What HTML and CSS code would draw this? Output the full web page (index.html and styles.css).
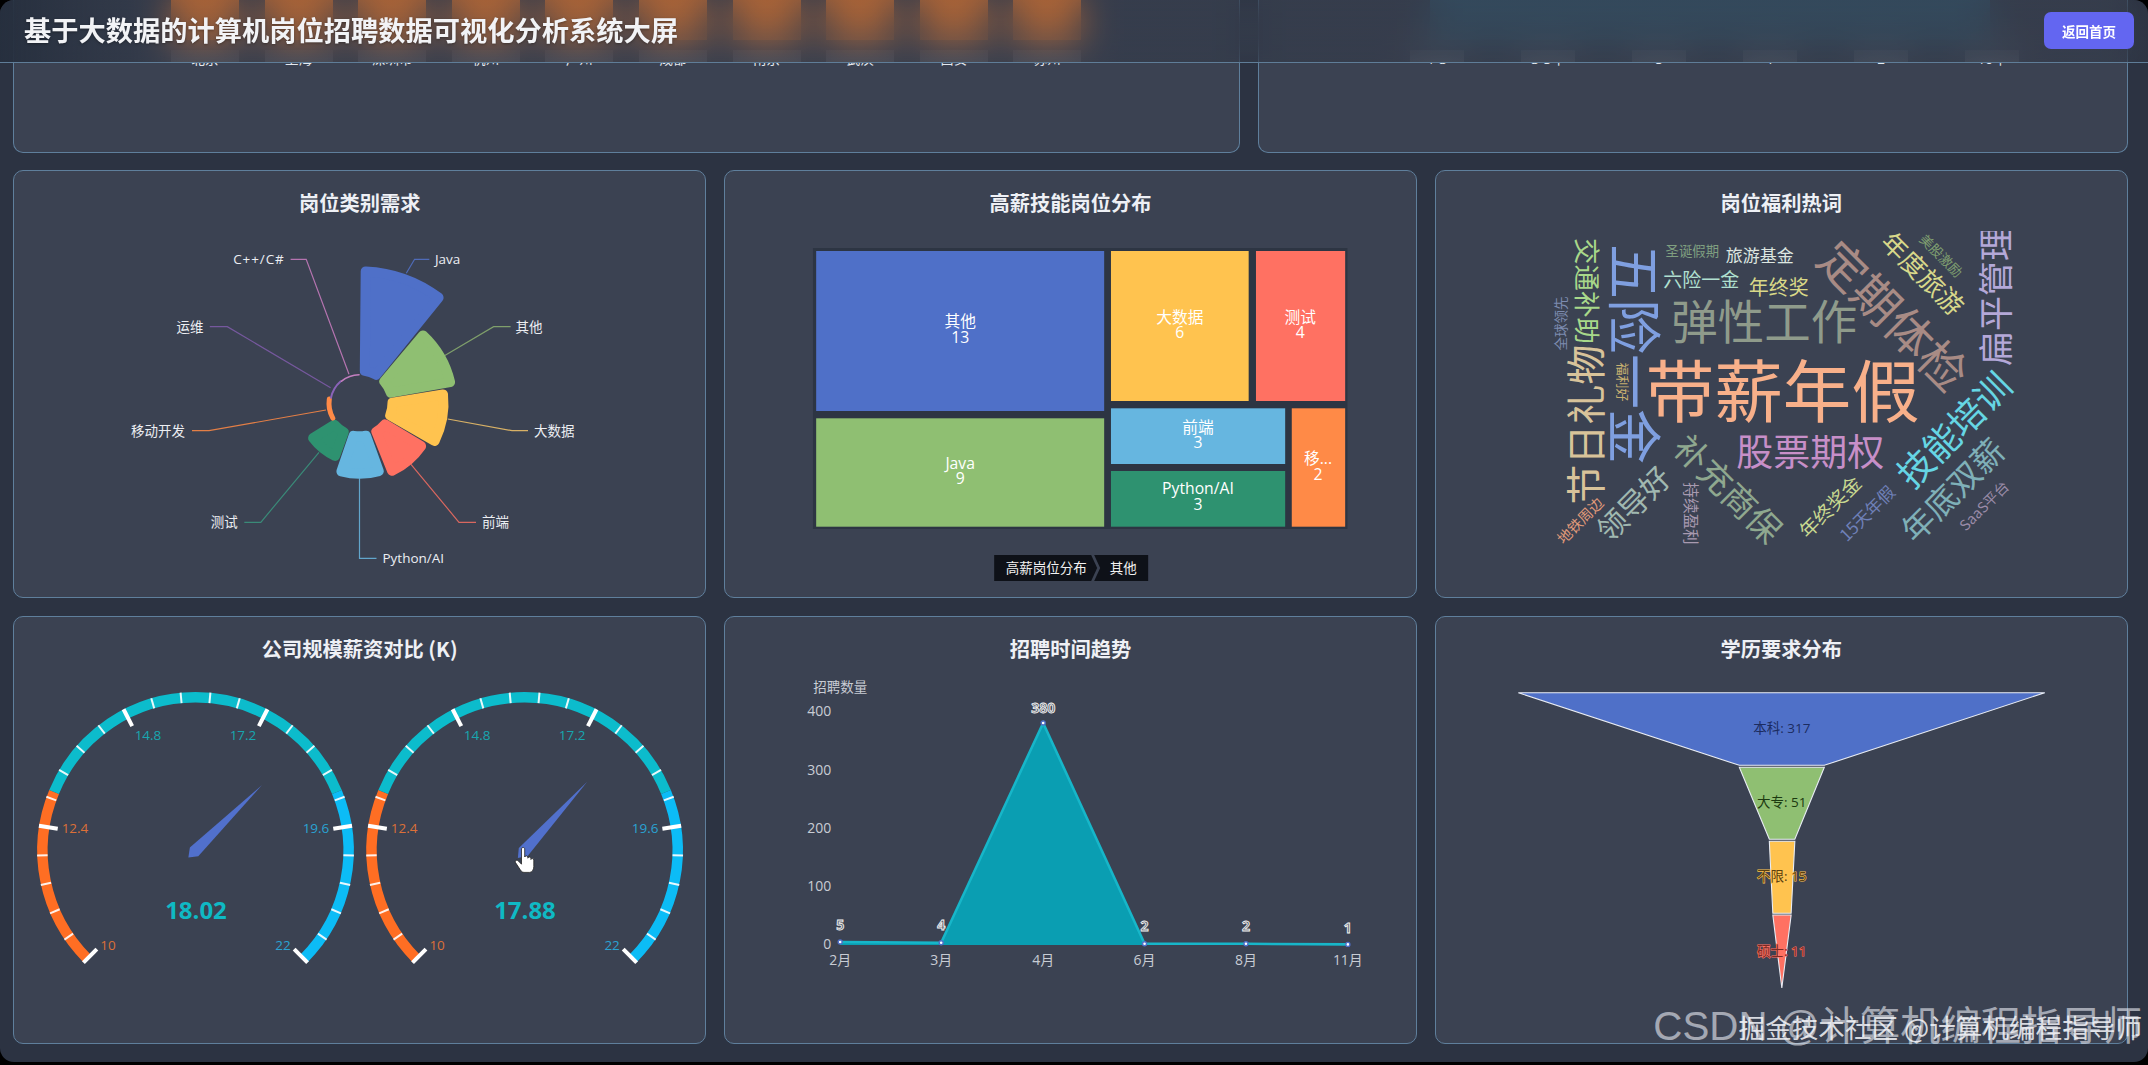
FILE: index.html
```html
<!DOCTYPE html>
<html lang="zh-CN">
<head>
<meta charset="utf-8">
<title>基于大数据的计算机岗位招聘数据可视化分析系统大屏</title>
<link rel="stylesheet" href="styles.css">
</head>
<body>
<div class="screen">
  <main class="board">
    <section class="row-top">
      <article class="card card-clip">
        <div class="bars bars-orange">
          <div class="bar-col"><i></i><span>北京</span></div>
          <div class="bar-col"><i></i><span>上海</span></div>
          <div class="bar-col"><i></i><span>深圳市</span></div>
          <div class="bar-col"><i></i><span>杭州</span></div>
          <div class="bar-col"><i></i><span>广州</span></div>
          <div class="bar-col"><i></i><span>成都</span></div>
          <div class="bar-col"><i></i><span>南京</span></div>
          <div class="bar-col"><i></i><span>武汉</span></div>
          <div class="bar-col"><i></i><span>西安</span></div>
          <div class="bar-col"><i></i><span>苏州</span></div>
        </div>
      </article>
      <article class="card card-clip">
        <div class="bars bars-blue">
          <div class="bar-col"><i></i><span>1-3</span></div>
          <div class="bar-col"><i></i><span>3-5年</span></div>
          <div class="bar-col"><i></i><span>5</span></div>
          <div class="bar-col"><i></i><span>1</span></div>
          <div class="bar-col"><i></i><span>2</span></div>
          <div class="bar-col"><i></i><span>10年</span></div>
        </div>
      </article>
    </section>

    <section class="row">
      <article class="card">
        <h3 class="card-title">岗位类别需求</h3>
        <svg class="chart" viewBox="14 231 691.33 366">
          <g class="leaders">
            <polyline stroke="#4f6bb8" points="406.3,273.3 414.6,259.3 429.3,259.3"/>
            <polyline stroke="#7f9f6b" points="444.4,355.7 493.6,326.7 510.6,326.7"/>
            <polyline stroke="#d8b166" points="447.7,419 512,430.7 528,430.7"/>
            <polyline stroke="#d9675f" points="411,464.3 459,522.3 476,522.3"/>
            <polyline stroke="#62a6cc" points="359.5,478.3 359.5,558.3 376.5,558.3"/>
            <polyline stroke="#3a8a78" points="319,452.3 260.8,522.3 244.3,522.3"/>
            <polyline stroke="#e47f46" points="326,410 209,430.7 192,430.7"/>
            <polyline stroke="#76589e" points="330.6,387.7 227.3,326.7 209.8,326.7"/>
            <polyline stroke="#b574b0" points="349,374.3 306.2,259.3 290.6,259.3"/>
          </g>
          <g class="rose">
            <path class="s-blue" d="M365.7 271.4A132 132 0 0 1 438.6 297.6L376.1 374.8A33 33 0 0 0 364.8 370.7Z"/>
            <path class="s-green" d="M423 335.4A93 93 0 0 1 450.1 382.2L390.8 392.7A33 33 0 0 0 384.3 381.5Z"/>
            <path class="s-yellow" d="M443 394.4A84 84 0 0 1 434.6 440.9L390.2 415.3A33 33 0 0 0 392.5 402.8Z"/>
            <path class="s-red" d="M421.1 446.1A75 75 0 0 1 392.1 470.8L376.3 431.7A33 33 0 0 0 384.9 424.4Z"/>
            <path class="s-sky" d="M378.8 471.1A70.5 70.5 0 0 1 341.4 471.4L353.6 435.8A33 33 0 0 0 366 435.7Z"/>
            <path class="s-teal" d="M335.1 455.9A58 58 0 0 1 313.1 438.1L334.5 424.8A33 33 0 0 0 343.7 432.2Z"/>
          </g>
          <path class="thin thin-orange" d="M332.8 418.1A30.5 30.5 0 0 1 329.3 399.1"/>
          <path class="thin thin-purple" d="M331 397.8A29 29 0 0 1 340.5 381.4"/>
          <path class="thin thin-pink" d="M341.6 381.2A28.5 28.5 0 0 1 359 374.8"/>
          <g class="lbl">
            <text x="435" y="259">Java</text>
            <text x="515.6" y="326.7">其他</text>
            <text x="534" y="430.7">大数据</text>
            <text x="482" y="522.3">前端</text>
            <text x="382.5" y="558.3">Python/AI</text>
          </g>
          <g class="lbl lbl-end">
            <text x="237.8" y="522.3">测试</text>
            <text x="185" y="430.7">移动开发</text>
            <text x="203.4" y="326.7">运维</text>
            <text class="wide" x="284.7" y="259.3">C++/C#</text>
          </g>
        </svg>
      </article>

      <article class="card">
        <h3 class="card-title">高薪技能岗位分布</h3>
        <svg class="chart" viewBox="724.83 231 691.33 366">
          <rect class="tm-bg" x="812.8" y="248" width="534.5" height="281"/>
          <rect fill="#4f70c8" x="816" y="251" width="288" height="160"/>
          <rect fill="#8fbf72" x="816" y="418.3" width="288" height="108.4"/>
          <rect fill="#ffc34f" x="1110.8" y="251" width="137.7" height="150"/>
          <rect fill="#ff7162" x="1255.8" y="251" width="89.2" height="150"/>
          <rect fill="#66b6e0" x="1110.8" y="408.3" width="174.2" height="55.7"/>
          <rect fill="#2e9270" x="1110.8" y="471" width="174.2" height="55.7"/>
          <rect fill="#ff8a47" x="1291.6" y="408.3" width="53.4" height="118.4"/>
          <g class="tm-text">
            <text x="960" y="321">其他</text><text x="960" y="336.7">13</text>
            <text x="960" y="462.7">Java</text><text x="960" y="478.3">9</text>
            <text x="1179.7" y="316.7">大数据</text><text x="1179.7" y="331.7">6</text>
            <text x="1300" y="316.7">测试</text><text x="1300" y="331.7">4</text>
            <text x="1197.8" y="427.3">前端</text><text x="1197.8" y="442.3">3</text>
            <text x="1197.8" y="488.3">Python/AI</text><text x="1197.8" y="504.3">3</text>
            <text x="1317.8" y="458.3">移...</text><text x="1317.8" y="474">2</text>
          </g>
          <polygon class="crumb" points="994,555 1091,555 1097,568 1091,581 994,581"/>
          <polygon class="crumb" points="1094,555 1148,555 1148,581 1094,581 1100,568"/>
          <g class="crumb-text">
            <text x="1046" y="568">高薪岗位分布</text>
            <text x="1123" y="568">其他</text>
          </g>
        </svg>
      </article>

      <article class="card">
        <h3 class="card-title">岗位福利热词</h3>
        <svg class="chart" viewBox="1435.67 231 691.33 366">
          <g class="cloud">
            <text x="1782.5" y="388" font-size="68.5" fill="#f8b08a">带薪年假</text>
            <text x="1637.4" y="354" font-size="55" fill="#7f9fe0" transform="rotate(90 1637.4 354)">五险一金</text>
            <text x="1895" y="314" font-size="47" fill="#a88b85" transform="rotate(45 1895 314)">定期体检</text>
            <text x="1764" y="319" font-size="46.5" fill="#8f9b8b">弹性工作</text>
            <text x="1810" y="450.5" font-size="37" fill="#c78fc8">股票期权</text>
            <text x="1952" y="428" font-size="36" fill="#66d6e4" transform="rotate(-45 1952 428)">技能培训</text>
            <text x="1951" y="488.5" font-size="32.5" fill="#7fb0b8" transform="rotate(-45 1951 488.5)">年底双薪</text>
            <text x="1583.4" y="424.6" font-size="40" fill="#d8c39a" transform="rotate(-90 1583.4 424.6)">节日礼物</text>
            <text x="1588" y="291" font-size="26.5" fill="#a8d88a" transform="rotate(90 1588 291)">交通补助</text>
            <text x="1729" y="487.5" font-size="34" fill="#8fa88f" transform="rotate(45 1729 487.5)">补充商保</text>
            <text x="1632" y="502.5" font-size="30" fill="#a0b8b0" transform="rotate(-45 1632 502.5)">领导好</text>
            <text x="1923.5" y="272.5" font-size="26" fill="#d8d88a" transform="rotate(45 1923.5 272.5)">年度旅游</text>
            <text x="1993" y="296" font-size="35" fill="#b4a8d8" transform="rotate(-90 1993 296)">扁平管理</text>
            <text x="1829" y="506" font-size="19.5" fill="#c8d890" transform="rotate(-45 1829 506)">年终奖金</text>
            <text x="1866" y="512.5" font-size="17" fill="#6f80b8" transform="rotate(-45 1866 512.5)">15天年假</text>
            <text x="1983" y="505" font-size="14.5" fill="#9a8ba8" transform="rotate(-45 1983 505)">SaaS平台</text>
            <text x="1691.7" y="513.5" font-size="15.6" fill="#a89ab0" transform="rotate(90 1691.7 513.5)">持续盈利</text>
            <text x="1579" y="520" font-size="14.5" fill="#e09a7a" transform="rotate(-45 1579 520)">地铁周边</text>
            <text x="1560" y="323.5" font-size="13.5" fill="#7d8cb0" transform="rotate(-90 1560 323.5)">全球领先</text>
            <text x="1623" y="382" font-size="13" fill="#c8b070" transform="rotate(90 1623 382)">福利好</text>
            <text x="1692" y="250.5" font-size="13.4" fill="#7f9f80">圣诞假期</text>
            <text x="1759.5" y="255" font-size="17" fill="#dde6e0">旅游基金</text>
            <text x="1701" y="279" font-size="19" fill="#b0e0d0">六险一金</text>
            <text x="1778.5" y="287" font-size="20" fill="#d8d888">年终奖</text>
            <text x="1941.5" y="255" font-size="13.5" fill="#7f9f70" transform="rotate(45 1941.5 255)">美股激励</text>
          </g>
        </svg>
      </article>
    </section>

    <section class="row">
      <article class="card">
        <h3 class="card-title">公司规模薪资对比 (K)</h3>
        <svg class="chart" viewBox="14 677 691.33 366">
          <defs>
            <g id="gauge">
              <g class="g-band">
                <path class="g-orange" d="M87.3 958.7A153 153 0 0 1 54.1 791.9"/>
                <path class="g-teal" d="M54.1 791.9A153 153 0 0 1 336.9 791.9"/>
                <path class="g-blue" d="M336.9 791.9A153 153 0 0 1 303.7 958.7"/>
              </g>
              <g class="g-minor">
                <line x1="195.5" y1="692" x2="195.5" y2="702.5" transform="rotate(-124.2 195.5 850.5)"/>
                <line x1="195.5" y1="692" x2="195.5" y2="702.5" transform="rotate(-113.4 195.5 850.5)"/>
                <line x1="195.5" y1="692" x2="195.5" y2="702.5" transform="rotate(-102.6 195.5 850.5)"/>
                <line x1="195.5" y1="692" x2="195.5" y2="702.5" transform="rotate(-91.8 195.5 850.5)"/>
                <line x1="195.5" y1="692" x2="195.5" y2="702.5" transform="rotate(-70.2 195.5 850.5)"/>
                <line x1="195.5" y1="692" x2="195.5" y2="702.5" transform="rotate(-59.4 195.5 850.5)"/>
                <line x1="195.5" y1="692" x2="195.5" y2="702.5" transform="rotate(-48.6 195.5 850.5)"/>
                <line x1="195.5" y1="692" x2="195.5" y2="702.5" transform="rotate(-37.8 195.5 850.5)"/>
                <line x1="195.5" y1="692" x2="195.5" y2="702.5" transform="rotate(-16.2 195.5 850.5)"/>
                <line x1="195.5" y1="692" x2="195.5" y2="702.5" transform="rotate(-5.4 195.5 850.5)"/>
                <line x1="195.5" y1="692" x2="195.5" y2="702.5" transform="rotate(5.4 195.5 850.5)"/>
                <line x1="195.5" y1="692" x2="195.5" y2="702.5" transform="rotate(16.2 195.5 850.5)"/>
                <line x1="195.5" y1="692" x2="195.5" y2="702.5" transform="rotate(37.8 195.5 850.5)"/>
                <line x1="195.5" y1="692" x2="195.5" y2="702.5" transform="rotate(48.6 195.5 850.5)"/>
                <line x1="195.5" y1="692" x2="195.5" y2="702.5" transform="rotate(59.4 195.5 850.5)"/>
                <line x1="195.5" y1="692" x2="195.5" y2="702.5" transform="rotate(70.2 195.5 850.5)"/>
                <line x1="195.5" y1="692" x2="195.5" y2="702.5" transform="rotate(91.8 195.5 850.5)"/>
                <line x1="195.5" y1="692" x2="195.5" y2="702.5" transform="rotate(102.6 195.5 850.5)"/>
                <line x1="195.5" y1="692" x2="195.5" y2="702.5" transform="rotate(113.4 195.5 850.5)"/>
                <line x1="195.5" y1="692" x2="195.5" y2="702.5" transform="rotate(124.2 195.5 850.5)"/>
              </g>
              <g class="g-major">
                <line x1="195.5" y1="692" x2="195.5" y2="711" transform="rotate(-135 195.5 850.5)"/>
                <line x1="195.5" y1="692" x2="195.5" y2="711" transform="rotate(-81 195.5 850.5)"/>
                <line x1="195.5" y1="692" x2="195.5" y2="711" transform="rotate(-27 195.5 850.5)"/>
                <line x1="195.5" y1="692" x2="195.5" y2="711" transform="rotate(27 195.5 850.5)"/>
                <line x1="195.5" y1="692" x2="195.5" y2="711" transform="rotate(81 195.5 850.5)"/>
                <line x1="195.5" y1="692" x2="195.5" y2="711" transform="rotate(135 195.5 850.5)"/>
              </g>
              <g class="g-lbl">
                <text class="c-orange" x="108" y="945">10</text>
                <text class="c-orange" x="75" y="828">12.4</text>
                <text class="c-teal" x="148" y="735">14.8</text>
                <text class="c-teal" x="243" y="735">17.2</text>
                <text class="c-blue" x="316" y="828">19.6</text>
                <text class="c-blue" x="283" y="945">22</text>
              </g>
            </g>
          </defs>
          <use href="#gauge"/>
          <use href="#gauge" transform="translate(329.1 0)"/>
          <polygon class="needle" points="0,-93 -6,2 0,10 6,2" transform="translate(195.5 850.5) rotate(45.5)"/>
          <polygon class="needle" points="0,-93 -6,2 0,10 6,2" transform="translate(524.6 850.5) rotate(42.3)"/>
          <text class="g-value" x="196" y="910">18.02</text>
          <text class="g-value" x="525" y="910">17.88</text>
          <path class="hand" d="M521.5 849c0-2 3.2-2 3.2 0v8c.6-1.6 3.1-1.5 3.1.4v.8c.6-1.6 3.1-1.5 3.1.4v.9c.6-1.3 2.9-1.2 2.9.6v6.4c0 3.2-1.9 5.9-4.2 5.9h-5.6c-2.2 0-3.2-1.7-4.9-4.4l-3.6-5.4c-1.1-1.9 1.4-3.3 2.9-1.6l3.1 3.2Z"/>
        </svg>
      </article>

      <article class="card">
        <h3 class="card-title">招聘时间趋势</h3>
        <svg class="chart" viewBox="724.83 677 691.33 366">
          <text class="axis-name" x="840" y="687.3">招聘数量</text>
          <g class="axis axis-y">
            <text x="831" y="711">400</text>
            <text x="831" y="770">300</text>
            <text x="831" y="828">200</text>
            <text x="831" y="885.7">100</text>
            <text x="831" y="943.3">0</text>
          </g>
          <path class="area" d="M840 945V942L941 942.7L1043 723L1144.4 943.8L1245.8 943.8L1347.7 944.4V945Z"/>
          <polyline class="line" points="840,942 941,942.7 1043,723 1144.4,943.8 1245.8,943.8 1347.7,944.4"/>
          <g class="dots">
            <circle cx="840" cy="942" r="2"/><circle cx="941" cy="942.7" r="2"/><circle cx="1043" cy="723" r="2"/>
            <circle cx="1144.4" cy="943.8" r="2"/><circle cx="1245.8" cy="943.8" r="2"/><circle cx="1347.7" cy="944.4" r="2"/>
          </g>
          <g class="axis">
            <text x="840" y="959.3">2月</text>
            <text x="941" y="959.3">3月</text>
            <text x="1043" y="959.3">4月</text>
            <text x="1144.4" y="959.3">6月</text>
            <text x="1245.8" y="959.3">8月</text>
            <text x="1347.7" y="959.3">11月</text>
          </g>
          <g class="vals">
            <text x="1043" y="707.7">380</text>
            <text x="840" y="925">5</text>
            <text x="941" y="925">4</text>
            <text x="1144.4" y="926">2</text>
            <text x="1245.8" y="926">2</text>
            <text x="1347.7" y="927.7">1</text>
          </g>
        </svg>
      </article>

      <article class="card">
        <h3 class="card-title">学历要求分布</h3>
        <svg class="chart" viewBox="1435.67 677 691.33 366">
          <g class="funnel">
            <polygon class="s-blue" points="1518,692.7 2044.5,692.7 1824,765.3 1739,765.3"/>
            <polygon class="s-green" points="1739,767.3 1824,767.3 1794.5,839.3 1769,839.3"/>
            <polygon class="s-yellow" points="1769,841.3 1794.5,841.3 1790.8,913.3 1772.5,913.3"/>
            <polygon class="s-red" points="1772.5,915 1790.8,915 1781.5,988"/>
          </g>
          <g class="f-lbl">
            <text class="f-1" x="1781.5" y="728">本科: 317</text>
            <text class="f-2" x="1781.5" y="801.7">大专: 51</text>
            <text class="f-3" x="1781.5" y="875.7">不限: 15</text>
            <text class="f-4" x="1781.5" y="950.7">硕士: 11</text>
          </g>
        </svg>
      </article>
    </section>
  </main>

  <header class="topbar">
    <h1 class="topbar-title">基于大数据的计算机岗位招聘数据可视化分析系统大屏</h1>
    <button class="home-btn">返回首页</button>
  </header>

  <div class="wm wm-csdn">CSDN @计算机编程指导师</div>
  <div class="wm wm-juejin">掘金技术社区 @计算机编程指导师</div>
</div>
</body>
</html>
```
FILE: styles.css
```css
* { box-sizing: border-box; }
html, body { margin: 0; height: 1065px; background: #000; overflow: hidden; }
body { font-family: "Open Sans", "Noto Sans CJK SC", sans-serif; }

.screen {
  position: relative;
  width: 2148px;
  height: 1062px;
  overflow: hidden;
  background: #2c3342;
  border-radius: 14px;
}

.board {
  display: flex;
  flex-direction: column;
  padding: 0 20px 0 13px;
}
.row-top {
  display: grid;
  grid-template-columns: 1227fr 870fr;
  gap: 18px;
  height: 153px;
  margin-bottom: 17px;
}
.row {
  display: grid;
  grid-template-columns: repeat(3, 1fr);
  gap: 17.5px;
  height: 428px;
  margin-bottom: 18px;
}

.card {
  display: flex;
  flex-direction: column;
  min-width: 0;
  background: #3b4252;
  border: 1px solid #5f7f9c;
  border-radius: 10px;
  overflow: hidden;
}
.card-clip { border-top: 0; border-radius: 0 0 10px 10px; }
.card-title {
  margin: 0;
  height: 60px;
  line-height: 63px;
  text-align: center;
  color: #eef0f5;
  font-family: "Noto Sans CJK SC", sans-serif;
  font-size: 20.25px;
  font-weight: 700;
}
.chart { display: block; width: 100%; height: 366px; }

/* Row that scrolled under the header: bars and the foot of their axis labels */
.bars { display: flex; }
.bars-orange { gap: 25.6px; padding-left: 157px; }
.bars-blue {
  gap: 21px;
  padding-left: 133px;
  background: linear-gradient(#37566c, #37566c) 171px 0 / 560px 40px no-repeat;
}
.bar-col { flex: none; }
.bar-col i { display: block; height: 62px; }
.bars-orange .bar-col { width: 68px; }
.bars-orange .bar-col i {
  background: linear-gradient(#f68030 0 40px, transparent 40px 50px, rgba(255, 255, 255, .16) 50px);
}
.bars-blue .bar-col { width: 90px; }
.bars-blue .bar-col i {
  background: linear-gradient(transparent 0 50px, rgba(255, 255, 255, .14) 50px) center / 54px 100% no-repeat;
}
.bar-col span {
  display: flex;
  align-items: flex-end;
  justify-content: center;
  height: 4px;
  overflow: hidden;
  font-size: 13.5px;
  line-height: 13px;
  white-space: nowrap;
  color: #e4e8ee;
}

/* Header */
.topbar {
  position: absolute;
  top: 0;
  left: 0;
  right: 0;
  height: 63px;
  display: flex;
  align-items: center;
  justify-content: space-between;
  padding: 0 14px 4px 24px;
  background: linear-gradient(90deg, rgba(38, 47, 62, .95) 0, rgba(47, 54, 68, .4) 170px);
  border-bottom: 1px solid #5f7d98;
  backdrop-filter: blur(18px);
}
.topbar-title {
  margin: 0;
  color: #f2f3f6;
  font-family: "Noto Sans CJK SC", sans-serif;
  font-size: 27.25px;
  font-weight: 700;
  white-space: nowrap;
  text-shadow: 0 1px 3px rgba(0, 0, 0, .35);
}
.home-btn {
  width: 90px;
  height: 37px;
  margin-top: 3px;
  padding: 0;
  border: 0;
  border-radius: 7px;
  background: #6366f1;
  color: #fff;
  font-family: "Noto Sans CJK SC", sans-serif;
  font-size: 13.5px;
  font-weight: 700;
}

/* Shared chart text */
svg text {
  font-family: "Open Sans", "Noto Sans CJK SC", sans-serif;
  dominant-baseline: central;
}

/* Rose */
.leaders polyline { fill: none; stroke-width: 1.2; }
.rose path { stroke-width: 10; stroke-linejoin: round; }
.s-blue { fill: #4f70c8; stroke: #4f70c8; }
.s-green { fill: #8fbf72; stroke: #8fbf72; }
.s-yellow { fill: #ffc34f; stroke: #ffc34f; }
.s-red { fill: #ff7162; stroke: #ff7162; }
.s-sky { fill: #66b6e0; stroke: #66b6e0; }
.s-teal { fill: #2e9270; stroke: #2e9270; }
.thin { fill: none; stroke-linecap: round; }
.thin-orange { stroke: #ff8a47; stroke-width: 5; }
.thin-purple { stroke: #8a63b8; stroke-width: 2; }
.thin-pink { stroke: #c47fc0; stroke-width: 1.6; }
.lbl text { font-size: 13.5px; fill: #eceef2; }
.lbl-end text { text-anchor: end; }
.lbl .wide { letter-spacing: .9px; }

/* Treemap */
.tm-bg { fill: #2d3543; }
.tm-text text { font-size: 15.75px; fill: #fff; text-anchor: middle; }
.crumb { fill: #0e1118; }
.crumb-text text { font-size: 13.5px; fill: #f2f2f2; text-anchor: middle; }

/* Word cloud */
.cloud text { text-anchor: middle; font-family: "Noto Sans CJK SC", sans-serif; }

/* Gauges */
.g-band path { fill: none; stroke-width: 10.5; }
.g-orange { stroke: #ff6e23; }
.g-teal { stroke: #0cbccc; }
.g-blue { stroke: #0cbcf6; }
.g-minor line { stroke: #fff; stroke-width: 2; opacity: .9; }
.g-major line { stroke: #fff; stroke-width: 4; }
.g-lbl text { font-size: 13.5px; text-anchor: middle; }
.c-orange { fill: #dc7038; }
.c-teal { fill: #17a6b0; }
.c-blue { fill: #2aa2d2; }
.needle { fill: #5170cc; }
.g-value {
  font-size: 24px;
  font-weight: 700;
  fill: #0fb9c4;
  text-anchor: middle;
}
.hand { fill: #fff; stroke: #222; stroke-width: .8; stroke-linejoin: round; }

/* Line chart */
.axis-name { font-size: 13.5px; fill: #c8ccd4; text-anchor: middle; }
.axis text { font-size: 14px; fill: #c8ccd4; text-anchor: middle; }
.axis-y text { text-anchor: end; }
.area { fill: #0a9eb2; }
.line { fill: none; stroke: #17b6c9; stroke-width: 2.6; }
.dots circle { fill: #fff; stroke: #4f6fc8; stroke-width: 1.4; }
.vals text {
  font-size: 14px;
  font-weight: 700;
  fill: #5a606c;
  stroke: #f2f2f2;
  stroke-width: .9;
  text-anchor: middle;
}

/* Funnel */
.funnel polygon { stroke: #e8ecf4; stroke-width: 1.1; }
.f-lbl text { font-size: 13.5px; text-anchor: middle; paint-order: stroke; }
.f-1 { fill: #1c2c60; }
.f-2 { fill: #1c3a10; }
.f-3 { fill: #5b4010; stroke: #ffc34f; stroke-width: 1.2; }
.f-4 { fill: #7c2a24; stroke: #ff7162; stroke-width: 1.2; }

/* Watermarks */
.wm { position: absolute; white-space: nowrap; }
.wm-csdn {
  top: 1006px;
  right: 6px;
  font-family: "Liberation Sans", "Noto Sans CJK SC", sans-serif;
  font-size: 40.3px;
  line-height: 41px;
  color: rgba(236, 239, 246, .6);
}
.wm-juejin {
  top: 1011px;
  right: 6px;
  font-family: "Noto Sans CJK SC", sans-serif;
  font-size: 26.6px;
  line-height: 32px;
  color: rgba(245, 246, 250, .85);
}
```
